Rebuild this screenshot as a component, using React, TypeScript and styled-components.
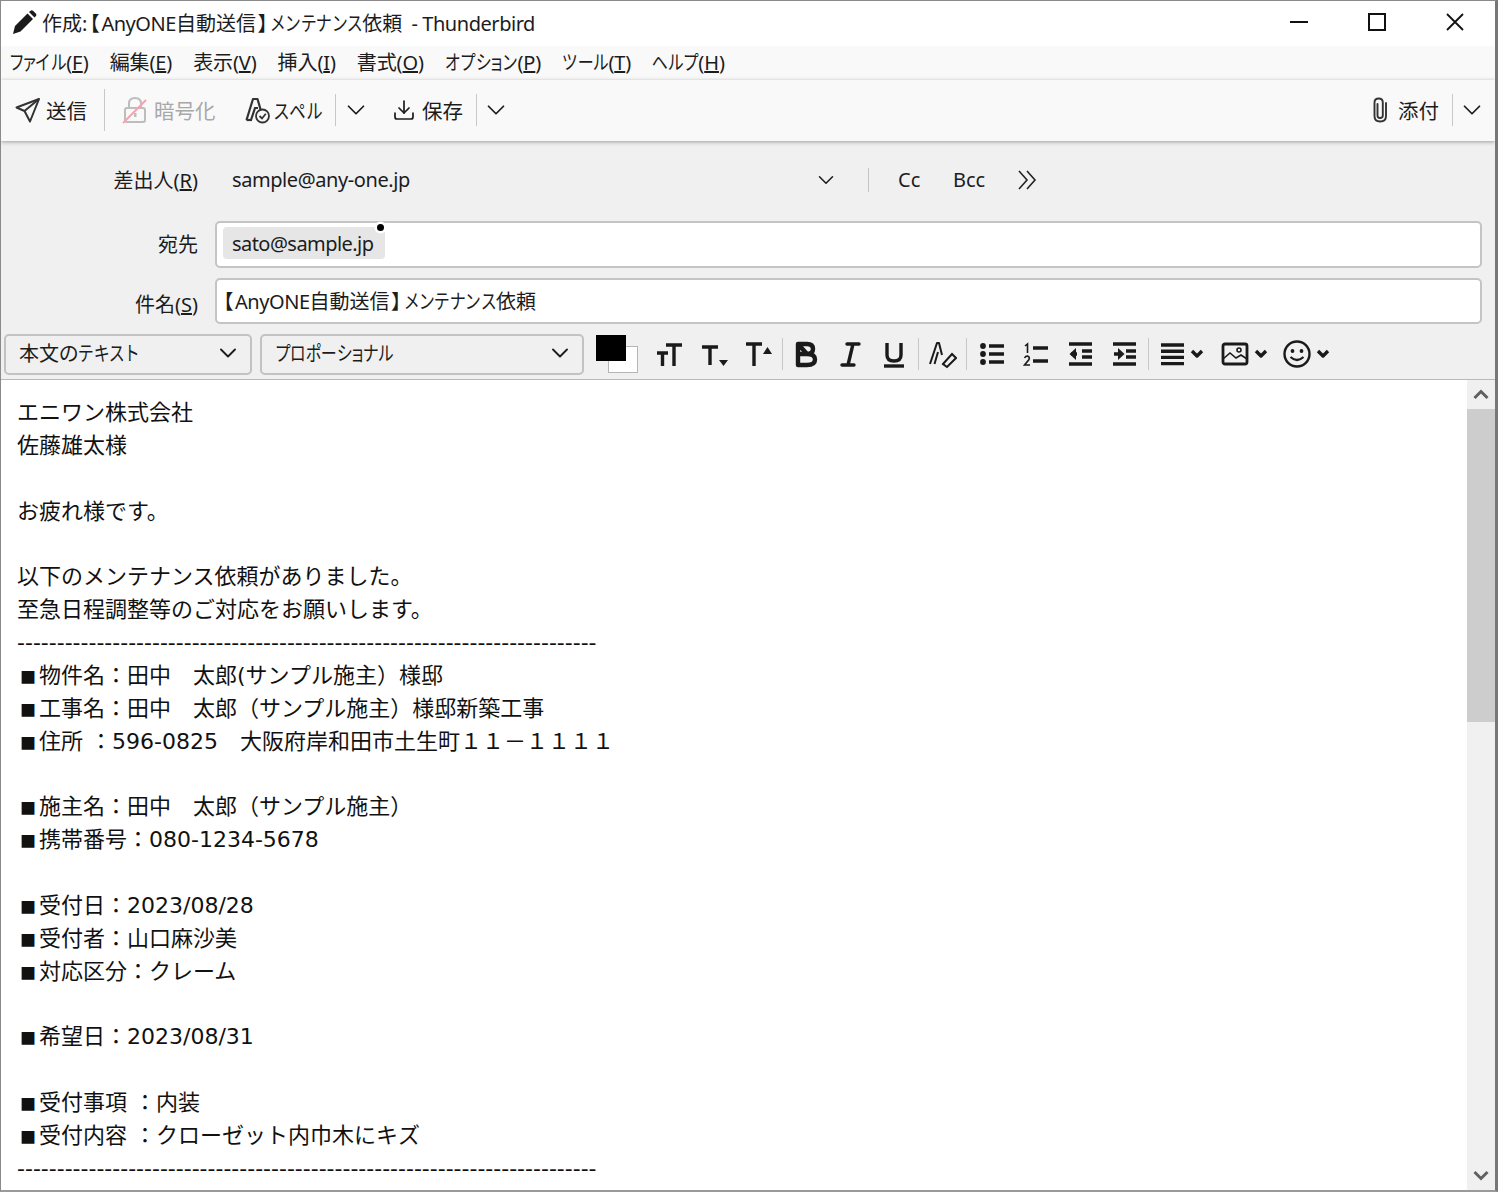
import * as React from "react";
import styled, { createGlobalStyle } from "styled-components";
import { ChevronDown, Download } from "lucide-react";

const GlobalStyle = createGlobalStyle`
  html, body {
    margin: 0;
    padding: 0;
    background: #fff;
  }
  body {
    font-family: "Noto Sans", "Noto Sans CJK JP", sans-serif;
    color: #1c1c1c;
  }
`;

const Window = styled.div`
  width: 1498px;
  height: 1192px;
  box-sizing: border-box;
  overflow: hidden;
  display: flex;
  flex-direction: column;
  border-top: 1px solid #8a8a8a;
  border-left: 1px solid #8a8a8a;
  border-right: 3px solid #777;
  border-bottom: 2px solid #9a9a9a;
  font-size: 20px;
  font-feature-settings: "palt";
`;

/* Meiryo UI has much narrower kana than Noto, so each one gets a tighter cell */
const Glyph = styled.span<{ $cell: number }>`
  display: inline-flex;
  justify-content: center;
  width: ${(p) => p.$cell}em;
  font-feature-settings: normal;
  transform: scaleX(0.8);
`;

const SMALL_KANA = "ァィゥェォッャュョ";

const Kana = ({ text, cell = 0.77 }: { text: string; cell?: number }) => (
  <>
    {text.split("").map((c, i) => (
      <Glyph key={i} $cell={SMALL_KANA.includes(c) ? 0.55 : cell}>
        {c}
      </Glyph>
    ))}
  </>
);

const Latin = styled.span<{ $left?: number }>`
  letter-spacing: -0.45px;
  margin-left: ${(p) => p.$left ?? 0}px;
`;

const Bracket = styled.span`
  margin: 0 2px;
`;

const TitleBar = styled.div`
  height: 45px;
  flex: none;
  box-sizing: border-box;
  padding: 0 0 3px 11px;
  background: #fff;
  display: flex;
  align-items: center;
`;

const TitleText = styled.div`
  margin-left: 5px;
  flex: 1;
  white-space: nowrap;
`;

const WindowButtons = styled.div`
  display: flex;
  align-items: center;
  margin-right: 1px;
`;

const WindowButton = styled.div`
  width: 78px;
  height: 42px;
  display: flex;
  align-items: center;
  justify-content: center;
`;

const MenuBar = styled.div`
  height: 34px;
  flex: none;
  box-sizing: border-box;
  padding: 0 0 3px 8px;
  background: #f9f9f9;
  display: flex;
  align-items: center;
  gap: 21px;
`;

const MenuItem = styled.div`
  white-space: nowrap;
  letter-spacing: -0.12px;
`;

const Toolbar = styled.div`
  height: 61px;
  flex: none;
  box-sizing: border-box;
  background: #f9f9f9;
  display: flex;
  align-items: center;
  font-size: 20.5px;
  padding: 0 8px 1px 0;
  box-shadow: 0 1px 4px rgba(0, 0, 0, 0.35);
  position: relative;
  z-index: 1;
`;

const ToolButton = styled.div<{ $left: number; $gap?: number; $disabled?: boolean }>`
  display: flex;
  align-items: center;
  gap: ${(p) => p.$gap ?? 6}px;
  margin-left: ${(p) => p.$left}px;
  color: ${(p) => (p.$disabled ? "#a8a8a8" : "#1c1c1c")};
  white-space: nowrap;
`;

const ToolSeparator = styled.div<{ $left: number; $tall?: boolean }>`
  width: 1px;
  height: ${(p) => (p.$tall ? 42 : 32)}px;
  background: #c8c8c8;
  margin-left: ${(p) => p.$left}px;
`;

const ToolChevron = styled(ChevronDown)<{ $left: number }>`
  margin-left: ${(p) => p.$left}px;
  flex: none;
`;

const Spacer = styled.div`
  flex: 1;
`;

const Header = styled.div`
  flex: none;
  height: 239px;
  box-sizing: border-box;
  background: #f0f0f0;
  border-bottom: 1px solid #a9bdd0;
  display: flex;
  flex-direction: column;
`;

const FieldRow = styled.div<{ $height: number; $top?: number }>`
  height: ${(p) => p.$height}px;
  margin-top: ${(p) => p.$top ?? 0}px;
  flex: none;
  display: grid;
  grid-template-columns: 197px 1fr;
  column-gap: 17px;
  align-items: center;
  padding-right: 13px;
`;

const FieldLabel = styled.div<{ $drop?: boolean }>`
  text-align: right;
  white-space: nowrap;
  padding-bottom: ${(p) => (p.$drop ? 0 : 2)}px;
  padding-top: ${(p) => (p.$drop ? 5 : 0)}px;
`;

const FromField = styled.div`
  display: flex;
  align-items: center;
  padding-left: 17px;
  padding-bottom: 2px;
`;

const FromAddress = styled.div`
  width: 581px;
  letter-spacing: -0.42px;
`;

const FromChevron = styled(ChevronDown)`
  margin-right: 29px;
`;

const FromSeparator = styled.div`
  width: 1px;
  height: 24px;
  background: #c4c4c4;
  margin-right: 29px;
`;

const CopyLink = styled.div<{ $width: number }>`
  width: ${(p) => p.$width}px;
`;

const TextBox = styled.div<{ $height: number }>`
  height: ${(p) => p.$height}px;
  box-sizing: border-box;
  background: #fff;
  border: 2px solid #c4c4c4;
  border-radius: 5px;
  display: flex;
  align-items: center;
  padding: 0 0 2px 4px;
  white-space: nowrap;
`;

const Pill = styled.div`
  height: 32px;
  box-sizing: border-box;
  background: #e6e6e6;
  border-radius: 4px;
  margin-left: 2px;
  padding: 0 12px 0 9px;
  display: flex;
  align-items: center;
  position: relative;
  letter-spacing: -0.55px;
`;

const PillDot = styled.span`
  position: absolute;
  top: -3px;
  right: 1px;
  width: 7px;
  height: 7px;
  border-radius: 50%;
  background: #000;
  box-shadow: 0 0 0 2.5px #fff;
`;

const FormatBar = styled.div`
  display: flex;
  align-items: center;
  height: 42px;
  padding-left: 3px;
`;

const Select = styled.div<{ $width: number; $left?: number }>`
  width: ${(p) => p.$width}px;
  height: 41px;
  flex: none;
  box-sizing: border-box;
  margin-left: ${(p) => p.$left ?? 0}px;
  border: 2px solid #c2c2c2;
  border-radius: 5px;
  display: flex;
  align-items: center;
  justify-content: space-between;
  padding: 0 8px 3px 13px;
`;

const ColorWell = styled.div`
  width: 42px;
  height: 38px;
  flex: none;
  margin-left: 12px;
  margin-right: 10px;
  position: relative;
`;

const ColorBack = styled.div`
  position: absolute;
  right: 0;
  bottom: 0;
  width: 28px;
  height: 25px;
  background: #fff;
  border: 1px solid #b5b5b5;
`;

const ColorFront = styled.div`
  position: absolute;
  left: 0;
  top: 0;
  width: 30px;
  height: 26px;
  background: #000;
`;

const FormatButton = styled.div<{ $width?: number }>`
  width: ${(p) => p.$width ?? 44}px;
  height: 36px;
  flex: none;
  display: flex;
  align-items: center;
  justify-content: center;
  gap: 4px;
`;

const FormatSeparator = styled.div<{ $after?: number }>`
  width: 1px;
  height: 32px;
  flex: none;
  background: #c8c8c8;
  margin: 0 ${(p) => p.$after ?? 1.5}px 0 1.5px;
`;

const Content = styled.div`
  flex: 1;
  min-height: 0;
  display: flex;
  background: #fff;
`;

const Body = styled.pre`
  flex: 1;
  margin: 0;
  padding: 17px 0 0 16px;
  overflow: hidden;
  font-family: "DejaVu Sans", "Noto Sans CJK JP", sans-serif;
  font-feature-settings: normal;
  font-size: 22px;
  line-height: 32.87px;
  color: #111;
`;

const BodyLine = styled.div`
  height: 32.87px;
`;

const Mark = styled.span`
  display: inline-block;
  width: 22px;
  text-align: center;
  font-family: "Noto Sans CJK JP", sans-serif;
  font-size: 16px;
  line-height: 1;
`;

const ScrollBar = styled.div`
  width: 28px;
  flex: none;
  background: #f0f0f0;
  display: flex;
  flex-direction: column;
  align-items: center;
`;

const ScrollArrow = styled.div`
  height: 29px;
  flex: none;
  width: 100%;
  display: flex;
  align-items: center;
  justify-content: center;
`;

const ScrollThumb = styled.div`
  width: 100%;
  height: 313px;
  flex: none;
  background: #cdcdcd;
`;

const ScrollTrack = styled.div`
  flex: 1;
`;

const PencilIcon = () => (
  <svg width="25" height="25" viewBox="0 0 25 25" fill="#1a1a1a">
    <path d="M1 24 L3 16 L15.5 3.5 L21 9 L8.5 21.5 Z" />
    <path d="M17 2 L19 0.5 Q20 0 21 0.7 L24 3.8 Q24.8 5 24 6 L22.5 7.6 Z" />
  </svg>
);

const SendIcon = () => (
  <svg width="26" height="26" viewBox="0 0 26 26" fill="none" stroke="#333" strokeWidth="2" strokeLinejoin="round">
    <path d="M24 2 L1.5 10.5 L9.5 14 L15 24.5 Z" />
    <path d="M24 2 L9.5 14" />
  </svg>
);

const LockIcon = () => (
  <svg width="26" height="28" viewBox="0 0 26 28" fill="none">
    <rect x="3" y="12" width="20" height="14" rx="2" stroke="#bdbdbd" strokeWidth="2" />
    <path d="M7 12 V7.5 Q7 2 13 2 Q19 2 19 7.5 V12" stroke="#bdbdbd" strokeWidth="2" />
    <rect x="12" y="17" width="2.5" height="4" fill="#bdbdbd" />
    <path d="M1 27 L24 4" stroke="#f0a5b4" strokeWidth="2" />
  </svg>
);

const SpellIcon = () => (
  <svg width="26" height="28" viewBox="0 0 26 28" fill="none" stroke="#333" strokeWidth="2.2">
    <path d="M1.5 24 L8 3 H12.5 L16 15" strokeLinejoin="round" />
    <path d="M6 24 L10 12 H13" />
    <path d="M1.5 24 H7" />
    <circle cx="17.5" cy="20" r="6.5" fill="#f9f9f9" strokeWidth="1.8" />
    <path d="M14.5 20 L17 22.5 L20.8 17.8" strokeWidth="1.8" />
  </svg>
);

const ClipIcon = () => (
  <svg width="17" height="26" viewBox="0 0 17 26" fill="none" stroke="#333" strokeWidth="1.9" strokeLinecap="round">
    <path d="M5.5 7 V18.5 Q5.5 21 8 21 Q10.8 21 10.8 18.5 V5.5 Q10.8 1.5 6.8 1.5 Q2.5 1.5 2.5 5.5 V19 Q2.5 24.5 8.2 24.5 Q14 24.5 14 19 V6" />
  </svg>
);

const MoreIcon = () => (
  <svg width="20" height="22" viewBox="0 0 20 22" fill="none" stroke="#222" strokeWidth="1.6">
    <path d="M2 2 L10 11 L2 20" />
    <path d="M10 2 L18 11 L10 20" />
  </svg>
);

const MinimizeIcon = () => (
  <svg width="18" height="18" viewBox="0 0 18 18">
    <rect x="0" y="8" width="18" height="2" fill="#111" />
  </svg>
);

const MaximizeIcon = () => (
  <svg width="18" height="18" viewBox="0 0 18 18" fill="none">
    <rect x="1" y="1" width="16" height="16" stroke="#111" strokeWidth="2" />
  </svg>
);

const CloseIcon = () => (
  <svg width="18" height="18" viewBox="0 0 18 18" fill="none">
    <path d="M1 1 L17 17 M17 1 L1 17" stroke="#111" strokeWidth="1.8" />
  </svg>
);

const FormatIcon = ({ children, width = 30 }: { children: React.ReactNode; width?: number }) => (
  <svg width={width} height="30" viewBox={`0 0 ${width} 30`} fill="none" stroke="#1a1a1a" strokeWidth="3.4">
    {children}
  </svg>
);

const MiniChevron = () => (
  <svg width="14" height="10" viewBox="0 0 14 10" fill="none" stroke="#1a1a1a" strokeWidth="3.4">
    <path d="M2 2 L7 7 L12 2" strokeLinejoin="round" />
  </svg>
);

const dashes = "-".repeat(73);

const bodyLines = [
  "エニワン株式会社",
  "佐藤雄太様",
  "",
  "お疲れ様です。",
  "",
  "以下のメンテナンス依頼がありました。",
  "至急日程調整等のご対応をお願いします。",
  dashes,
  "■物件名：田中　太郎(サンプル施主）様邸",
  "■工事名：田中　太郎（サンプル施主）様邸新築工事",
  "■住所 ：596-0825　大阪府岸和田市土生町１１－１１１１",
  "",
  "■施主名：田中　太郎（サンプル施主）",
  "■携帯番号：080-1234-5678",
  "",
  "■受付日：2023/08/28",
  "■受付者：山口麻沙美",
  "■対応区分：クレーム",
  "",
  "■希望日：2023/08/31",
  "",
  "■受付事項 ：内装",
  "■受付内容 ：クローゼット内巾木にキズ",
  dashes,
];

const menus: [React.ReactNode, string][] = [
  [<Kana text="ファイル" />, "F"],
  ["編集", "E"],
  ["表示", "V"],
  ["挿入", "I"],
  ["書式", "O"],
  [<Kana text="オプション" />, "P"],
  [<Kana text="ツール" />, "T"],
  [<Kana text="ヘルプ" />, "H"],
];

export default function App() {
  return (
    <>
      <GlobalStyle />
      <Window>
        <TitleBar>
          <PencilIcon />
          <TitleText>
            作成:<Bracket>【</Bracket><Latin>AnyONE</Latin>自動送信<Bracket>】</Bracket>
            <Kana text="メンテナンス" />依頼 <Latin $left={4}>- Thunderbird</Latin>
          </TitleText>
          <WindowButtons>
            <WindowButton><MinimizeIcon /></WindowButton>
            <WindowButton><MaximizeIcon /></WindowButton>
            <WindowButton><CloseIcon /></WindowButton>
          </WindowButtons>
        </TitleBar>

        <MenuBar>
          {menus.map(([name, key]) => (
            <MenuItem key={key}>
              {name}(<u>{key}</u>)
            </MenuItem>
          ))}
        </MenuBar>

        <Toolbar>
          <ToolButton $left={14} $gap={5}><SendIcon />送信</ToolButton>
          <ToolSeparator $left={17} $tall />
          <ToolButton $left={17} $disabled><LockIcon />暗号化</ToolButton>
          <ToolButton $left={29} $gap={2}><SpellIcon /><span><Kana text="スペル" cell={0.82} /></span></ToolButton>
          <ToolSeparator $left={12} />
          <ToolChevron $left={5} size={30} strokeWidth={1.4} />
          <ToolButton $left={21}><Download size={24} strokeWidth={1.7} />保存</ToolButton>
          <ToolSeparator $left={13} />
          <ToolChevron $left={4} size={30} strokeWidth={1.4} />
          <Spacer />
          <ToolButton $left={0} $gap={9}><ClipIcon />添付</ToolButton>
          <ToolSeparator $left={13} />
          <ToolChevron $left={4} size={30} strokeWidth={1.4} />
        </Toolbar>

        <Header>
          <FieldRow $height={79}>
            <FieldLabel>差出人(<u>R</u>)</FieldLabel>
            <FromField>
              <FromAddress>sample@any-one.jp</FromAddress>
              <FromChevron size={26} strokeWidth={1.4} />
              <FromSeparator />
              <CopyLink $width={55}>Cc</CopyLink>
              <CopyLink $width={64}>Bcc</CopyLink>
              <MoreIcon />
            </FromField>
          </FieldRow>
          <FieldRow $height={48}>
            <FieldLabel>宛先</FieldLabel>
            <TextBox $height={47}>
              <Pill>
                sato@sample.jp
                <PillDot />
              </Pill>
            </TextBox>
          </FieldRow>
          <FieldRow $height={64} $top={1}>
            <FieldLabel $drop>件名(<u>S</u>)</FieldLabel>
            <TextBox $height={46}>
              <span>
                <Bracket>【</Bracket><Latin>AnyONE</Latin>自動送信<Bracket>】</Bracket>
                <Kana text="メンテナンス" />依頼
              </span>
            </TextBox>
          </FieldRow>
          <FormatBar>
            <Select $width={248}>
              <span>本文の<Kana text="テキスト" /></span>
              <ChevronDown size={28} strokeWidth={1.6} />
            </Select>
            <Select $width={324} $left={8}>
              <span><Kana text="プロポーショナル" /></span>
              <ChevronDown size={28} strokeWidth={1.6} />
            </Select>
            <ColorWell>
              <ColorBack />
              <ColorFront />
            </ColorWell>
            <FormatButton>
              <FormatIcon>
                <path d="M2 14 H13 M7.5 14 V27" />
                <path d="M11 6 H27 M19 6 V27" />
              </FormatIcon>
            </FormatButton>
            <FormatButton>
              <FormatIcon>
                <path d="M3 8 H19 M11 8 V26" />
                <path d="M20 21 H29 L24.5 27 Z" fill="#1a1a1a" stroke="none" />
              </FormatIcon>
            </FormatButton>
            <FormatButton>
              <FormatIcon>
                <path d="M3 5 H19 M11 5 V27" />
                <path d="M20 15 H29 L24.5 8 Z" fill="#1a1a1a" stroke="none" />
              </FormatIcon>
            </FormatButton>
            <FormatSeparator />
            <FormatButton>
              <FormatIcon>
                <path d="M7 5 H16 Q22 5 22 10 Q22 15 16 15 H7 M16 15 Q24 15 24 20.5 Q24 26 16 26 H7 V5 Z" strokeWidth="4.4" strokeLinejoin="round" />
              </FormatIcon>
            </FormatButton>
            <FormatButton>
              <FormatIcon>
                <path d="M12 5 H24 M18 5 L13 26 M7 26 H19" strokeLinecap="round" />
              </FormatIcon>
            </FormatButton>
            <FormatButton>
              <FormatIcon>
                <path d="M8 4 V16 Q8 22 15 22 Q22 22 22 16 V4" />
                <path d="M5 27 H25" />
              </FormatIcon>
            </FormatButton>
            <FormatSeparator />
            <FormatButton>
              <FormatIcon>
                <path d="M3 25 L10 4 H12 L15 16" strokeWidth="2" strokeLinejoin="round" />
                <path d="M7.5 25 L11 13" strokeWidth="2" />
                <path d="M16 27 L25 17 L29 21 L20 30 Z" strokeWidth="2" transform="translate(0 -2)" />
              </FormatIcon>
            </FormatButton>
            <FormatSeparator $after={4} />
            <FormatButton>
              <FormatIcon>
                <circle cx="5" cy="7" r="2.9" fill="#1a1a1a" stroke="none" />
                <circle cx="5" cy="15" r="2.9" fill="#1a1a1a" stroke="none" />
                <circle cx="5" cy="23" r="2.9" fill="#1a1a1a" stroke="none" />
                <path d="M11 7 H26 M11 15 H26 M11 23 H26" />
              </FormatIcon>
            </FormatButton>
            <FormatButton>
              <FormatIcon>
                <path d="M3 7 L5.5 5 V14" strokeWidth="1.6" />
                <path d="M2.5 19 Q3.5 17 5.5 17 Q8 18 7 20.5 L2.5 26 H8" strokeWidth="1.6" />
                <path d="M11 9 H26 M11 22 H26" />
              </FormatIcon>
            </FormatButton>
            <FormatButton>
              <FormatIcon>
                <path d="M3 5 H26 M3 25 H26 M16 12 H26 M16 18 H26 M11 15 H5" />
                <path d="M10 9 L3.5 15 L10 21 Z" fill="#1a1a1a" stroke="none" />
              </FormatIcon>
            </FormatButton>
            <FormatButton>
              <FormatIcon>
                <path d="M3 5 H26 M3 25 H26 M16 12 H26 M16 18 H26 M4 15 H9" />
                <path d="M8 9 L14.5 15 L8 21 Z" fill="#1a1a1a" stroke="none" />
              </FormatIcon>
            </FormatButton>
            <FormatSeparator />
            <FormatButton $width={62}>
              <FormatIcon width={26}>
                <path d="M1 6 H24 M1 12.2 H24 M1 18.4 H24 M1 24.6 H24" />
              </FormatIcon>
              <MiniChevron />
            </FormatButton>
            <FormatButton $width={62}>
              <FormatIcon>
                <rect x="3" y="5" width="24" height="20" rx="2" strokeWidth="2.8" />
                <circle cx="19" cy="11" r="2" strokeWidth="1.6" />
                <path d="M3 20 L10 14 L16 19 L21 16 L27 20" strokeWidth="1.6" />
              </FormatIcon>
              <MiniChevron />
            </FormatButton>
            <FormatButton $width={62}>
              <FormatIcon>
                <circle cx="15" cy="15" r="12.5" strokeWidth="2.4" />
                <circle cx="10.5" cy="12" r="1.9" fill="#1a1a1a" stroke="none" />
                <circle cx="19.5" cy="12" r="1.9" fill="#1a1a1a" stroke="none" />
                <path d="M8.5 18 Q15 24 21.5 18" strokeWidth="2.2" />
              </FormatIcon>
              <MiniChevron />
            </FormatButton>
          </FormatBar>
        </Header>

        <Content>
          <Body>
            {bodyLines.map((line, i) => (
              <BodyLine key={i}>
                {line.startsWith("■") ? (
                  <>
                    <Mark>■</Mark>
                    {line.slice(1)}
                  </>
                ) : (
                  line
                )}
              </BodyLine>
            ))}
          </Body>
          <ScrollBar>
            <ScrollArrow>
              <svg width="16" height="11" viewBox="0 0 16 11" fill="none" stroke="#606060" strokeWidth="3">
                <path d="M1.5 9 L8 2.5 L14.5 9" />
              </svg>
            </ScrollArrow>
            <ScrollThumb />
            <ScrollTrack />
            <ScrollArrow>
              <svg width="16" height="11" viewBox="0 0 16 11" fill="none" stroke="#606060" strokeWidth="3">
                <path d="M1.5 2 L8 8.5 L14.5 2" />
              </svg>
            </ScrollArrow>
          </ScrollBar>
        </Content>
      </Window>
    </>
  );
}
